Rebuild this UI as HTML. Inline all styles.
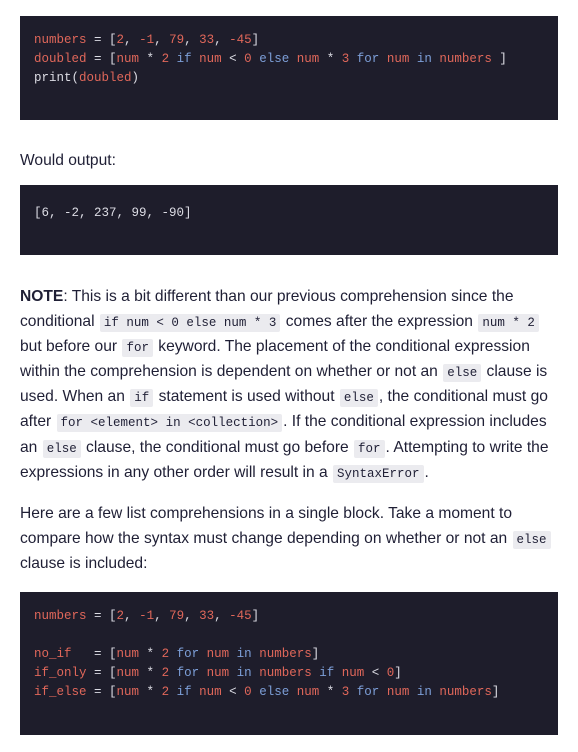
<!DOCTYPE html>
<html><head><meta charset="utf-8"><style>
body{margin:0;width:578px;height:752px;background:#fff;position:relative;overflow:hidden;font-family:"Liberation Sans",sans-serif;color:#1f1f35}
.cb{position:absolute;left:20px;width:538px;background:#1e1d2b;}
.cl{position:absolute;left:34px;font-family:"Liberation Mono",monospace;font-size:12.5px;white-space:pre;color:#dcdce4;line-height:19px}
.r{color:#e0675a}.b{color:#7d9fd8}
.t{position:absolute;left:20px;font-size:15.6px;white-space:nowrap;line-height:25px}
code{font-family:"Liberation Mono",monospace;font-size:12.5px;background:#ebebef;padding:2px 4px;border-radius:2px;margin:0 1px}
</style></head><body>
<div class="cb" style="top:16px;height:104px"></div>
<div class="cl" style="top:31px"><span class="r">numbers</span> = [<span class="r">2</span>, <span class="r">-1</span>, <span class="r">79</span>, <span class="r">33</span>, <span class="r">-45</span>]</div>
<div class="cl" style="top:50px"><span class="r">doubled</span> = [<span class="r">num</span> * <span class="r">2</span> <span class="b">if</span> <span class="r">num</span> &lt; <span class="r">0</span> <span class="b">else</span> <span class="r">num</span> * <span class="r">3</span> <span class="b">for</span> <span class="r">num</span> <span class="b">in</span> <span class="r">numbers</span> ]</div>
<div class="cl" style="top:69px">print(<span class="r">doubled</span>)</div>

<div class="t" style="top:148px">Would output:</div>

<div class="cb" style="top:185px;height:70px"></div>
<div class="cl" style="top:204px">[6, -2, 237, 99, -90]</div>

<div class="t" style="top:284px"><b>NOTE</b>: This is a bit different than our previous comprehension since the</div>
<div class="t" style="top:309px">conditional <code>if num &lt; 0 else num * 3</code> comes after the expression <code>num * 2</code></div>
<div class="t" style="top:334px">but before our <code>for</code> keyword. The placement of the conditional expression</div>
<div class="t" style="top:359px">within the comprehension is dependent on whether or not an <code>else</code> clause is</div>
<div class="t" style="top:384px">used. When an <code>if</code> statement is used without <code>else</code>, the conditional must go</div>
<div class="t" style="top:409px">after <code>for &lt;element&gt; in &lt;collection&gt;</code>. If the conditional expression includes</div>
<div class="t" style="top:435px">an <code>else</code> clause, the conditional must go before <code>for</code>. Attempting to write the</div>
<div class="t" style="top:460px">expressions in any other order will result in a <code>SyntaxError</code>.</div>

<div class="t" style="top:501px">Here are a few list comprehensions in a single block. Take a moment to</div>
<div class="t" style="top:526px">compare how the syntax must change depending on whether or not an <code>else</code></div>
<div class="t" style="top:551px">clause is included:</div>

<div class="cb" style="top:592px;height:143px"></div>
<div class="cl" style="top:607px"><span class="r">numbers</span> = [<span class="r">2</span>, <span class="r">-1</span>, <span class="r">79</span>, <span class="r">33</span>, <span class="r">-45</span>]</div>
<div class="cl" style="top:645px"><span class="r">no_if</span>   = [<span class="r">num</span> * <span class="r">2</span> <span class="b">for</span> <span class="r">num</span> <span class="b">in</span> <span class="r">numbers</span>]</div>
<div class="cl" style="top:664px"><span class="r">if_only</span> = [<span class="r">num</span> * <span class="r">2</span> <span class="b">for</span> <span class="r">num</span> <span class="b">in</span> <span class="r">numbers</span> <span class="b">if</span> <span class="r">num</span> &lt; <span class="r">0</span>]</div>
<div class="cl" style="top:683px"><span class="r">if_else</span> = [<span class="r">num</span> * <span class="r">2</span> <span class="b">if</span> <span class="r">num</span> &lt; <span class="r">0</span> <span class="b">else</span> <span class="r">num</span> * <span class="r">3</span> <span class="b">for</span> <span class="r">num</span> <span class="b">in</span> <span class="r">numbers</span>]</div>
</body></html>
